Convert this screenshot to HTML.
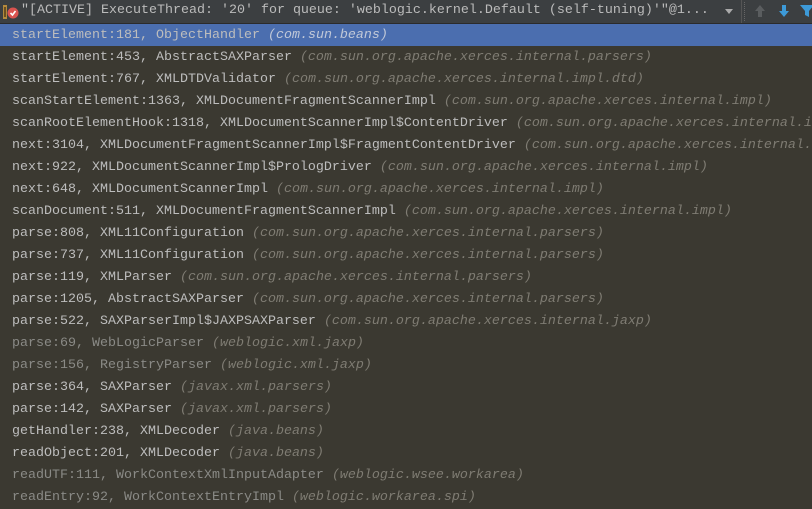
<!DOCTYPE html>
<html><head><meta charset="utf-8"><style>
html,body{margin:0;padding:0;width:812px;height:509px;overflow:hidden;background:#3b3931;}
.hdr{position:absolute;left:0;top:0;width:812px;height:23px;background:#3c3f41;border-bottom:1px solid #2b2b2b;}
.hdr .t{position:absolute;left:21px;top:3px;font:13.33px "Liberation Mono",monospace;color:#bbbbbb;white-space:nowrap;}
.combo{position:absolute;left:0;top:0;width:741px;height:23px;border-right:1px solid #555;}
.arrow{position:absolute;left:725px;top:9px;width:0;height:0;border-left:4px solid transparent;border-right:4px solid transparent;border-top:5px solid #aaa;}
.sep{position:absolute;left:744px;top:2px;height:19px;border-left:1px dotted #666;}
.list{position:absolute;left:0;top:24px;width:812px;}
.r{height:18px;padding-top:4px;line-height:22px;padding-left:12px;font:13.33px "Liberation Mono",monospace;white-space:nowrap;color:#bdbdbd;}
.r i{color:#7f7c73;}
.g{color:#8a8a86;}
.sel{background:#4b6eaf;}
.sel i{color:#c0c8d8;}
</style></head><body>
<div class="hdr">
<div class="combo"></div>
<svg style="position:absolute;left:3px;top:4px" width="16" height="16" viewBox="0 0 16 16"><rect x="0" y="1" width="4" height="14" fill="#b58a3c"/><rect x="1" y="3" width="2" height="10" fill="#6b4f20"/><circle cx="10" cy="9" r="5.5" fill="#d9534f"/><path d="M7.5 9l2 2 3-4" stroke="#fff" stroke-width="1.6" fill="none"/></svg>
<div class="t">"[ACTIVE] ExecuteThread: '20' for queue: 'weblogic.kernel.Default (self-tuning)'"@1...</div>
<div class="arrow"></div>
<div class="sep"></div>
<svg style="position:absolute;left:753px;top:3px" width="14" height="16" viewBox="0 0 14 16"><path d="M7 2L2 8h3v6h4V8h3z" fill="#5a5d5f"/></svg>
<svg style="position:absolute;left:777px;top:3px" width="14" height="16" viewBox="0 0 14 16"><path d="M7 14L2 8h3V2h4v6h3z" fill="#3d9ad8"/></svg>
<svg style="position:absolute;left:800px;top:4px" width="14" height="14" viewBox="0 0 14 14"><path d="M0 1h14L9 7v6L5 11V7z" fill="#3d9ad8"/></svg>
</div>
<div class="list">
<div class="r sel">startElement:181, ObjectHandler <i>(com.sun.beans)</i></div>
<div class="r">startElement:453, AbstractSAXParser <i>(com.sun.org.apache.xerces.internal.parsers)</i></div>
<div class="r">startElement:767, XMLDTDValidator <i>(com.sun.org.apache.xerces.internal.impl.dtd)</i></div>
<div class="r">scanStartElement:1363, XMLDocumentFragmentScannerImpl <i>(com.sun.org.apache.xerces.internal.impl)</i></div>
<div class="r">scanRootElementHook:1318, XMLDocumentScannerImpl$ContentDriver <i>(com.sun.org.apache.xerces.internal.impl)</i></div>
<div class="r">next:3104, XMLDocumentFragmentScannerImpl$FragmentContentDriver <i>(com.sun.org.apache.xerces.internal.impl)</i></div>
<div class="r">next:922, XMLDocumentScannerImpl$PrologDriver <i>(com.sun.org.apache.xerces.internal.impl)</i></div>
<div class="r">next:648, XMLDocumentScannerImpl <i>(com.sun.org.apache.xerces.internal.impl)</i></div>
<div class="r">scanDocument:511, XMLDocumentFragmentScannerImpl <i>(com.sun.org.apache.xerces.internal.impl)</i></div>
<div class="r">parse:808, XML11Configuration <i>(com.sun.org.apache.xerces.internal.parsers)</i></div>
<div class="r">parse:737, XML11Configuration <i>(com.sun.org.apache.xerces.internal.parsers)</i></div>
<div class="r">parse:119, XMLParser <i>(com.sun.org.apache.xerces.internal.parsers)</i></div>
<div class="r">parse:1205, AbstractSAXParser <i>(com.sun.org.apache.xerces.internal.parsers)</i></div>
<div class="r">parse:522, SAXParserImpl$JAXPSAXParser <i>(com.sun.org.apache.xerces.internal.jaxp)</i></div>
<div class="r g">parse:69, WebLogicParser <i>(weblogic.xml.jaxp)</i></div>
<div class="r g">parse:156, RegistryParser <i>(weblogic.xml.jaxp)</i></div>
<div class="r">parse:364, SAXParser <i>(javax.xml.parsers)</i></div>
<div class="r">parse:142, SAXParser <i>(javax.xml.parsers)</i></div>
<div class="r">getHandler:238, XMLDecoder <i>(java.beans)</i></div>
<div class="r">readObject:201, XMLDecoder <i>(java.beans)</i></div>
<div class="r g">readUTF:111, WorkContextXmlInputAdapter <i>(weblogic.wsee.workarea)</i></div>
<div class="r g">readEntry:92, WorkContextEntryImpl <i>(weblogic.workarea.spi)</i></div>
</div>
</body></html>
